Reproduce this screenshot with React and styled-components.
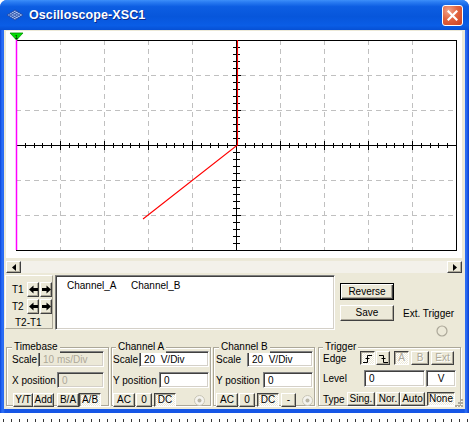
import React from 'react';
import styled, { createGlobalStyle, css } from 'styled-components';

const FONT = `"Liberation Sans", Arial, sans-serif`;
const FACE = '#ece9d8';

const GlobalStyle = createGlobalStyle`
  html, body { margin: 0; padding: 0; background: #fff; }
  body { font-family: ${FONT}; font-size: 10px; color: #000; }
  * { box-sizing: border-box; }
`;

const Page = styled.div`
  width: 469px;
  height: 422px;
  overflow: hidden;
  background: #fff;
  display: flex;
  flex-direction: column;
`;

const Window = styled.div`
  width: 469px;
  height: 413px;
  flex: none;
  display: flex;
  flex-direction: column;
  border-radius: 7px 7px 0 0;
  background: linear-gradient(to right, #0a3fcf 0, #1c5ff0 1px, #2f72f7 3px, #1656e6 5px, #1656e6 calc(100% - 5px), #2f72f7 calc(100% - 3px), #0a3fcf 100%);
`;

const Desk = styled.div`
  flex: 1;
  background: linear-gradient(to right, #333 0 1px, transparent 1px) 3px 6px / 8px 3px repeat-x;
`;

const TitleBar = styled.div`
  height: 30px;
  flex: none;
  display: flex;
  align-items: center;
  padding: 0 6px 0 7px;
  border-radius: 7px 7px 0 0;
  background: linear-gradient(to bottom, #3d8ff9 0%, #2a7cf2 7%, #0d5ee2 22%, #0756db 55%, #0a5de6 85%, #0650d4 100%);
`;

const Title = styled.span`
  margin-left: 5px;
  font: bold 12.5px ${FONT};
  color: #fff;
  text-shadow: 1px 1px 0 #0a2a8a;
  letter-spacing: 0.1px;
`;

const CloseBtn = styled.div`
  margin-left: auto;
  width: 21px;
  height: 21px;
  border: 1px solid #fff;
  border-radius: 3px;
  background: radial-gradient(circle at 30% 25%, #f2a58c 0, #e2643f 45%, #cc4020 100%);
  display: flex;
  align-items: center;
  justify-content: center;
`;

const Client = styled.div`
  position: relative;
  flex: 1;
  margin: 0 4px 4px;
  background: ${FACE};
  display: flex;
  flex-direction: column;
`;

const Screen = styled.div`
  margin: 1px 0 0 2px;
  width: 456px;
  height: 227px;
  background: #fff;
  flex: none;
`;

const Scrollbar = styled.div`
  margin: 3px 0 0 2px;
  width: 456px;
  height: 12px;
  flex: none;
  display: flex;
  background: #f3f1ea;
`;

const ScrollBtn = styled.div`
  width: 15px;
  height: 12px;
  margin-left: ${p => (p.$right ? 'auto' : '0')};
  background: ${FACE};
  border: 1px solid;
  border-color: #fff #404040 #404040 #fff;
  box-shadow: inset -1px -1px 0 #aca899;
  display: flex;
  align-items: center;
  justify-content: center;
`;

const TopControls = styled.div`
  margin: 2px 0 0 1px;
  height: 54px;
  flex: none;
  display: flex;
`;

const TBox = styled.div`
  width: 48px;
  height: 54px;
  border: 1px solid;
  border-color: #fff #aca899 #aca899 #fff;
  padding: 6px 0 0 6px;
  display: flex;
  flex-direction: column;
`;

const ArrowRow = styled.div`
  display: flex;
  align-items: center;
  height: 15px;
  margin-top: ${p => p.$mt || 0}px;
`;

const TLabel = styled.span`
  width: ${p => p.$w || 15}px;
  margin-left: ${p => p.$ml || 0}px;
  margin-top: ${p => p.$mt || 0}px;
  flex: none;
`;

const ArrowBtn = styled.div`
  width: 13px;
  height: 15px;
  margin-left: ${p => p.$ml || 0}px;
  background: ${FACE};
  border: 1px solid;
  border-color: #fff #404040 #404040 #fff;
  box-shadow: inset -1px -1px 0 #aca899;
  display: flex;
  align-items: center;
  justify-content: center;
`;

const ChannelList = styled.div`
  margin-left: 2px;
  width: 280px;
  height: 55px;
  background: #fff;
  border: 1px solid;
  border-color: #808080 #fff #fff #808080;
  box-shadow: inset 1px 1px 0 #404040, inset -1px -1px 0 #d4d0c8;
  padding: 4px 0 0 11px;
  display: flex;
  align-items: flex-start;
`;

const ListItem = styled.span`
  width: ${p => p.$w || 'auto'};
`;

const RightCol = styled.div`
  margin-left: 5px;
  display: flex;
  flex-direction: column;
`;

const SaveRow = styled.div`
  display: flex;
  align-items: center;
  margin-top: 5px;
`;

const ExtLabel = styled.span`
  margin-left: 9px;
`;

const Btn = styled.button`
  flex: none;
  width: ${p => p.$w}px;
  height: ${p => p.$h || 14}px;
  margin: ${p => p.$mt || 0}px 0 0 ${p => p.$ml || 0}px;
  padding: 0;
  font: 10px ${FONT};
  line-height: 1;
  color: ${p => (p.$off ? '#aca899' : '#000')};
  text-shadow: ${p => (p.$off ? '1px 1px 0 #fff' : 'none')};
  background: ${FACE};
  border: 1px solid;
  border-color: #fff #404040 #404040 #fff;
  box-shadow: inset -1px -1px 0 #aca899;
  display: flex;
  align-items: center;
  justify-content: center;
  ${p => p.$def && css`
    border-color: #000;
    box-shadow: inset 1px 1px 0 #fff, inset -1px -1px 0 #404040, inset -2px -2px 0 #aca899;
  `}
  ${p => p.$on && css`
    border-color: #404040 #fff #fff #404040;
    box-shadow: inset 1px 1px 0 #aca899;
    background: repeating-conic-gradient(#fff 0 25%, #ece9d8 0 50%) 0 0 / 2px 2px;
  `}
`;

const GroupsRow = styled.div`
  margin: 18px 0 0 2px;
  display: flex;
  align-items: flex-start;
  flex: none;
`;

const Group = styled.div`
  position: relative;
  flex: none;
  width: ${p => p.$w}px;
  height: 59px;
  margin-left: ${p => p.$ml || 0}px;
  border: 1px solid #aca899;
  box-shadow: inset 1px 1px 0 #fff, 1px 1px 0 #fff;
  padding: 3px ${p => p.$pr ?? 3}px 0 ${p => p.$pl ?? 4}px;
  display: flex;
  flex-direction: column;
  gap: 5px;
`;

const Legend = styled.span`
  position: absolute;
  top: -7px;
  left: ${p => p.$x || 5}px;
  padding: 0 2px;
  line-height: 12px;
  background: ${FACE};
`;

const Row = styled.div`
  display: flex;
  align-items: center;
  height: ${p => p.$h || 16}px;
  justify-content: ${p => (p.$spread ? 'space-between' : 'flex-start')};
`;

const Label = styled.span`
  flex: none;
  width: ${p => (p.$w ? `${p.$w}px` : 'auto')};
`;

const Field = styled.div`
  flex: none;
  width: ${p => p.$w}px;
  height: ${p => p.$h || 16}px;
  margin-left: ${p => p.$ml || 0}px;
  background: ${p => (p.$off ? FACE : '#fff')};
  color: ${p => (p.$off ? '#aca899' : '#000')};
  border: 1px solid;
  border-color: #808080 #fff #fff #808080;
  box-shadow: inset 1px 1px 0 #404040, inset -1px -1px 0 #d4d0c8;
  padding: 0 ${p => (p.$center ? 0 : 4)}px;
  display: flex;
  align-items: center;
  justify-content: ${p => (p.$center ? 'center' : 'flex-start')};
  white-space: pre;
`;

const RadioSlot = styled.div`
  margin-left: auto;
  margin-right: ${p => p.$mr || 0}px;
  display: flex;
`;

const ExtDot = styled.div`
  margin: 4px 0 0 96px;
  display: flex;
`;

const Grip = styled.div`
  position: absolute;
  right: 1px;
  bottom: 1px;
  display: flex;
`;

const GX = 10;
const GY = 9;
const GW = 440;
const GH = 210;
const CX = GX + GW / 2;
const CY = GY + GH / 2;

function Plot() {
  const vlines = [1, 2, 3, 4, 6, 7, 8, 9].map(i => GX + i * 44);
  const hlines = [1, 2, 4, 5].map(i => GY + i * 35);
  const xticks = [];
  for (let i = 1; i < 50; i++) {
    const x = Math.round(GX + i * 8.8) + 0.5;
    const l = i % 5 === 0 ? 4 : 2;
    xticks.push(<line key={`x${i}`} x1={x} x2={x} y1={CY - l} y2={CY + l + 1} />);
  }
  const yticks = [];
  for (let i = 1; i < 30; i++) {
    const y = GY + i * 7 + 0.5;
    const l = i % 5 === 0 ? 4 : 3;
    yticks.push(<line key={`y${i}`} x1={CX - l} x2={CX + l + 1} y1={y} y2={y} />);
  }
  return (
    <svg width="456" height="227" viewBox="0 0 456 227">
      <g stroke="#c0c0c0" strokeDasharray="5 4" shapeRendering="crispEdges">
        {vlines.map(x => <line key={x} x1={x + 0.5} x2={x + 0.5} y1={GY} y2={GY + GH} />)}
        {hlines.map(y => <line key={y} x1={GX} x2={GX + GW} y1={y + 0.5} y2={y + 0.5} />)}
      </g>
      <g stroke="#000" shapeRendering="crispEdges">
        <rect x={GX + 0.5} y={GY + 0.5} width={GW} height={GH} fill="none" strokeWidth="1.5" />
        <line x1={GX} x2={GX + GW} y1={CY + 0.5} y2={CY + 0.5} strokeWidth="1.5" />
        <line x1={CX + 0.5} x2={CX + 0.5} y1={GY} y2={GY + GH} strokeWidth="1.5" />
        {xticks}
        {yticks}
      </g>
      <polyline points={`${CX + 1.5},${GY} ${CX + 1.5},${CY} 137,188`} fill="none" stroke="#ff0000" strokeWidth="1.1" />
      <line x1={GX + 0.5} x2={GX + 0.5} y1={5} y2={GY + GH} stroke="#ff00ff" strokeWidth="1.5" />
      <polygon points="4,2 17,2 10.5,9" fill="#00e000" stroke="#009000" strokeWidth="0.8" />
      <text x="10.5" y="8" fontSize="6" textAnchor="middle" fontFamily="Liberation Sans, sans-serif" fill="#000">1</text>
    </svg>
  );
}

const Arrow = ({ dir }) => (
  <svg width="9" height="9" viewBox="0 0 9 9">
    <polygon
      points={dir === 'left' ? '0,4.5 4.5,0.5 4.5,3 9,3 9,6 4.5,6 4.5,8.5' : '9,4.5 4.5,0.5 4.5,3 0,3 0,6 4.5,6 4.5,8.5'}
      fill="#000"
    />
  </svg>
);

const Tri = ({ dir }) => (
  <svg width="4" height="7" viewBox="0 0 4 7">
    <polygon points={dir === 'left' ? '4,0 0,3.5 4,7' : '0,0 4,3.5 0,7'} fill="#000" />
  </svg>
);

const EdgeIcon = ({ fall }) => (
  <svg width="9" height="9" viewBox="0 0 9 9" fill="none" stroke="#000" strokeWidth="1">
    <path d={fall ? 'M0 1.5H4.5V8.5H9' : 'M0 8.5H4.5V1.5H9'} />
    <path d="M2.5 4.5H6.5" />
  </svg>
);

const Radio = () => (
  <svg width="11" height="11" viewBox="0 0 11 11">
    <circle cx="5.5" cy="5.5" r="5" fill="#f4f3ee" stroke="#c8c5b5" />
    <circle cx="5.5" cy="5.5" r="2" fill="#b8b5a6" />
  </svg>
);

const TitleIcon = () => (
  <svg width="17" height="12" viewBox="0 0 17 12">
    <polygon points="0,6 8,1 16,6 8,11" fill="#a9c6f6" stroke="#1d3f9a" strokeWidth="0.8" />
    <path d="M2 5 L10 10 M4 3.7 L12 8.7 M6 2.5 L14 7.5 M2 7 L10 2 M4 8.3 L12 3.3 M6 9.5 L14 4.5" stroke="#1d3f9a" strokeWidth="0.7" />
  </svg>
);

export default function App() {
  return (
    <Page>
      <GlobalStyle />
      <Window>
        <TitleBar>
          <TitleIcon />
          <Title>Oscilloscope-XSC1</Title>
          <CloseBtn>
            <svg width="11" height="11" viewBox="0 0 11 11">
              <path d="M1.5 1.5L9.5 9.5M9.5 1.5L1.5 9.5" stroke="#fff" strokeWidth="2.2" strokeLinecap="square" />
            </svg>
          </CloseBtn>
        </TitleBar>
        <Client>
          <Screen>
            <Plot />
          </Screen>
          <Scrollbar>
            <ScrollBtn><Tri dir="left" /></ScrollBtn>
            <ScrollBtn $right><Tri dir="right" /></ScrollBtn>
          </Scrollbar>
          <TopControls>
            <TBox>
              <ArrowRow>
                <TLabel>T1</TLabel>
                <ArrowBtn><Arrow dir="left" /></ArrowBtn>
                <ArrowBtn $ml={1}><Arrow dir="right" /></ArrowBtn>
              </ArrowRow>
              <ArrowRow $mt={2}>
                <TLabel>T2</TLabel>
                <ArrowBtn><Arrow dir="left" /></ArrowBtn>
                <ArrowBtn $ml={1}><Arrow dir="right" /></ArrowBtn>
              </ArrowRow>
              <TLabel $w={30} $ml={3} $mt={3}>T2-T1</TLabel>
            </TBox>
            <ChannelList>
              <ListItem $w="64px">Channel_A</ListItem>
              <ListItem>Channel_B</ListItem>
            </ChannelList>
            <RightCol>
              <Btn $w={54} $h={17} $mt={8} $def>Reverse</Btn>
              <SaveRow>
                <Btn $w={54} $h={16}>Save</Btn>
                <ExtLabel>Ext. Trigger</ExtLabel>
              </SaveRow>
              <ExtDot>
                <svg width="12" height="12" viewBox="0 0 12 12">
                  <circle cx="6" cy="6" r="5" fill="none" stroke="#aca899" strokeWidth="1.2" />
                </svg>
              </ExtDot>
            </RightCol>
          </TopControls>
          <GroupsRow>
            <Group $w={103} $pl={5} $pr={4}>
              <Legend $x={5}>Timebase</Legend>
              <Row $spread>
                <Label>Scale</Label>
                <Field $w={66} $off>10 ms/Div</Field>
              </Row>
              <Row $spread>
                <Label>X position</Label>
                <Field $w={47} $off>0</Field>
              </Row>
              <Row $h={14}>
                <Btn $w={20} $ml={1}>Y/T</Btn>
                <Btn $w={21}>Add</Btn>
                <Btn $w={22} $ml={3}>B/A</Btn>
                <Btn $w={22} $on>A/B</Btn>
              </Row>
            </Group>
            <Group $w={100} $ml={2} $pl={1} $pr={1}>
              <Legend $x={4}>Channel A</Legend>
              <Row $spread>
                <Label>Scale</Label>
                <Field $w={70}>{'20  V/Div'}</Field>
              </Row>
              <Row $spread>
                <Label>Y position</Label>
                <Field $w={50}>0</Field>
              </Row>
              <Row $h={14}>
                <Btn $w={22}>AC</Btn>
                <Btn $w={16} $ml={1}>0</Btn>
                <Btn $w={22} $ml={2} $on>DC</Btn>
                <RadioSlot $mr={4}><Radio /></RadioSlot>
              </Row>
            </Group>
            <Group $w={102} $ml={2} $pl={2} $pr={1}>
              <Legend $x={5}>Channel B</Legend>
              <Row $spread>
                <Label>Scale</Label>
                <Field $w={66}>{'20  V/Div'}</Field>
              </Row>
              <Row $spread>
                <Label>Y position</Label>
                <Field $w={50}>0</Field>
              </Row>
              <Row $h={14}>
                <Btn $w={22}>AC</Btn>
                <Btn $w={16} $ml={1}>0</Btn>
                <Btn $w={22} $ml={2} $on>DC</Btn>
                <Btn $w={15} $ml={2}>-</Btn>
                <RadioSlot $mr={0}><Radio /></RadioSlot>
              </Row>
            </Group>
            <Group $w={143} $ml={3} $pl={4} $pr={4}>
              <Legend $x={4}>Trigger</Legend>
              <Row $h={14}>
                <Label $w={37}>Edge</Label>
                <Btn $w={15} $on><EdgeIcon /></Btn>
                <Btn $w={14} $ml={1}><EdgeIcon fall /></Btn>
                <Btn $w={15} $ml={4} $off $on>A</Btn>
                <Btn $w={18} $ml={2} $off>B</Btn>
                <Btn $w={23} $ml={2} $off>Ext</Btn>
              </Row>
              <Row $h={17}>
                <Label $w={41}>Level</Label>
                <Field $w={61} $h={17}>0</Field>
                <Field $w={30} $h={17} $ml={1} $center>V</Field>
              </Row>
              <Row $h={14}>
                <Label $w={24}>Type</Label>
                <Btn $w={28}>Sing.</Btn>
                <Btn $w={24} $ml={1}>Nor.</Btn>
                <Btn $w={25}>Auto</Btn>
                <Btn $w={28} $ml={2} $on>None</Btn>
              </Row>
            </Group>
          </GroupsRow>
          <Grip>
            <svg width="9" height="9" viewBox="0 0 9 9" fill="#aca899">
              <rect x="6" y="0" width="2" height="2" />
              <rect x="3" y="3" width="2" height="2" />
              <rect x="6" y="3" width="2" height="2" />
              <rect x="0" y="6" width="2" height="2" />
              <rect x="3" y="6" width="2" height="2" />
              <rect x="6" y="6" width="2" height="2" />
            </svg>
          </Grip>
        </Client>
      </Window>
      <Desk />
    </Page>
  );
}
